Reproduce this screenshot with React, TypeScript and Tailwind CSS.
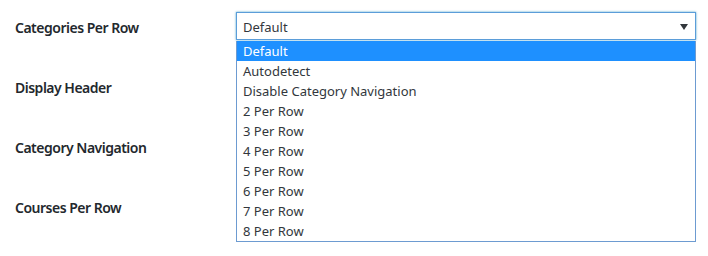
import * as React from 'react';

const options = [
    'Default',
    'Autodetect',
    'Disable Category Navigation',
    '2 Per Row',
    '3 Per Row',
    '4 Per Row',
    '5 Per Row',
    '6 Per Row',
    '7 Per Row',
    '8 Per Row',
];

const labels = ['Categories Per Row', 'Display Header', 'Category Navigation', 'Courses Per Row'];

function SelectBox() {
    return (
        <div className="relative w-[460px]">
            <div className="flex h-[28px] items-center justify-between border border-[#5b9dd9] bg-white pl-[6px] pr-[6px] pt-[3px] shadow-[0_0_2px_rgba(30,140,190,0.8)]">
                <span className="text-[13px] text-[#32373c]">Default</span>
                <svg width="8" height="6" viewBox="0 0 8 6" className="mb-[2px] mr-[1px]">
                    <path d="M0 0 L8 0 L4 6 Z" fill="#32373c" />
                </svg>
            </div>
            {/* open option list */}
            <ul className="absolute left-0 top-[29px] z-10 w-[460px] border-x border-b border-[#6d9bd1] bg-white">
                {options.map((opt, i) => (
                    <li
                        key={opt}
                        className={[
                            'flex h-[20px] items-center pl-[6px] pt-[2px] text-[13px]',
                            i === 0 ? 'bg-[#1e90ff] text-white' : 'text-[#32373c]',
                        ].join(' ')}
                    >
                        {opt}
                    </li>
                ))}
            </ul>
        </div>
    );
}

export default function App() {
    return (
        <div className="h-[256px] w-[708px] bg-white pt-[12px] font-['Noto_Sans',sans-serif]">
            <div className="flex flex-col gap-[32px]">
                {labels.map((label, i) => (
                    <div key={label} className="flex h-[28px] items-center">
                        <div className="w-[236px] pl-[15px] pt-[2px] text-[14px] font-semibold tracking-[-0.5px] text-[#23282d]">
                            {label}
                        </div>
                        {i === 0 ? <SelectBox /> : null}
                    </div>
                ))}
            </div>
        </div>
    );
}
